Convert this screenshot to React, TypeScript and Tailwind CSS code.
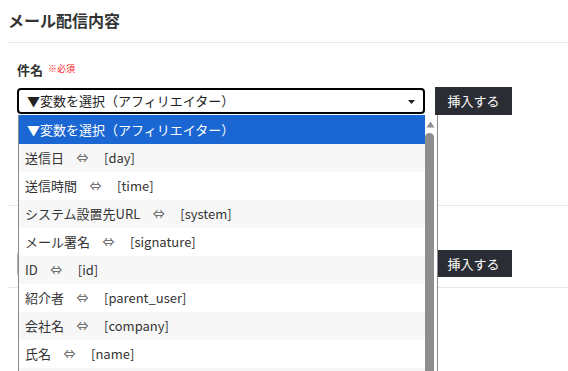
import React from "react";

const OPTIONS: { label: string; key: string }[] = [
  { label: "送信日", key: "[day]" },
  { label: "送信時間", key: "[time]" },
  { label: "システム設置先URL", key: "[system]" },
  { label: "メール署名", key: "[signature]" },
  { label: "ID", key: "[id]" },
  { label: "紹介者", key: "[parent_user]" },
  { label: "会社名", key: "[company]" },
  { label: "氏名", key: "[name]" },
];

const PLACEHOLDER = "▼変数を選択（アフィリエイター）";

function VarSelect({ focused }: { focused?: boolean }) {
  return (
    <div
      className={`flex items-center justify-between w-[408px] h-[26px] rounded-[4px] bg-white pl-[8px] pr-[8px] ${
        focused ? "border-2 border-black" : "border border-[#aaa]"
      }`}
    >
      <span className="text-[13px] leading-[20px] text-[#222] whitespace-nowrap">{focused ? PLACEHOLDER : ""}</span>
      <svg width="7" height="4" viewBox="0 0 7 4" className="mt-[2px]">
        <path d="M0 0h7L3.5 4z" fill="#222" />
      </svg>
    </div>
  );
}

function InsertButton({ h = "h-[28px]" }: { h?: string }) {
  return (
    <button
      className={`${h} w-[77px] bg-[#2a2d33] text-white text-[13px] leading-[20px] flex items-center justify-center`}
    >
      挿入する
    </button>
  );
}

function Field({ label, required, focused, btnH }: { label?: string; required?: boolean; focused?: boolean; btnH?: string }) {
  return (
    <div className="pl-[9px] pt-[20px]">
      <div className="flex items-center gap-[5px] h-[14px]">
        {label && <span className="text-[13px] font-bold text-[#333] leading-[14px]">{label}</span>}
        {required && <span className="text-[9px] text-[#f22] leading-[14px] -mt-[2px]">※必須</span>}
      </div>
      <div className="mt-[10px] flex items-center gap-[10px]">
        <VarSelect focused={focused} />
        <InsertButton h={btnH} />
      </div>
    </div>
  );
}

function Dropdown() {
  return (
    <div className="absolute left-[18px] top-[115px] w-[420px] h-[270px] bg-white border-x border-[#8a8a8a] flex overflow-hidden">
      <div className="flex-1 flex flex-col">
        <div className="h-[29px] shrink-0 bg-[#1a66d2] text-white text-[13px] leading-[20px] pl-[8px] flex items-center whitespace-nowrap">
          {PLACEHOLDER}
        </div>
        {OPTIONS.map((o, i) => (
          <div
            key={o.key}
            className={`h-[28px] shrink-0 flex items-center pl-[6px] text-[13px] leading-[20px] text-[#333] whitespace-nowrap ${
              i % 2 === 0 ? "bg-[#f7f7f7]" : "bg-white"
            }`}
          >
            <span>{o.label}</span>
            <span className="ml-[13px] mr-[16px] w-[11px] flex justify-center text-[12px] text-[#555]">⇔</span>
            <span>{o.key}</span>
          </div>
        ))}
        <div className="h-[28px] shrink-0 bg-[#f7f7f7]" />
      </div>
      <div className="w-[12px] bg-white flex flex-col items-start">
        <svg width="9" height="7" viewBox="0 0 9 7" className="mt-[6px] ml-[1px]">
          <path d="M0.5 6.5L4.5 0.5L8.5 6.5z" fill="#8e8e8e" />
        </svg>
        <div className="mt-[5px] w-[9px] flex-1 bg-[#8e8e8e] rounded-t-[5px]" />
      </div>
    </div>
  );
}

export default function App() {
  return (
    <div className="relative w-[568px] h-[371px] overflow-hidden bg-white font-['Noto_Sans_CJK_JP','Noto_Sans',sans-serif]">
      <div className="ml-2">
        <div className="h-[43px] border-b border-[#e8e8e8] pt-[10px]">
          <h2 className="text-[16px] font-bold leading-[20px] text-[#333]">メール配信内容</h2>
        </div>
        <div className="h-[163px] border-b border-[#e8e8e8]">
          <Field label="件名" required focused />
        </div>
        <div className="h-[82px] border-b border-[#e8e8e8]">
          <Field btnH="h-[27px]" />
        </div>
      </div>
      <Dropdown />
    </div>
  );
}
